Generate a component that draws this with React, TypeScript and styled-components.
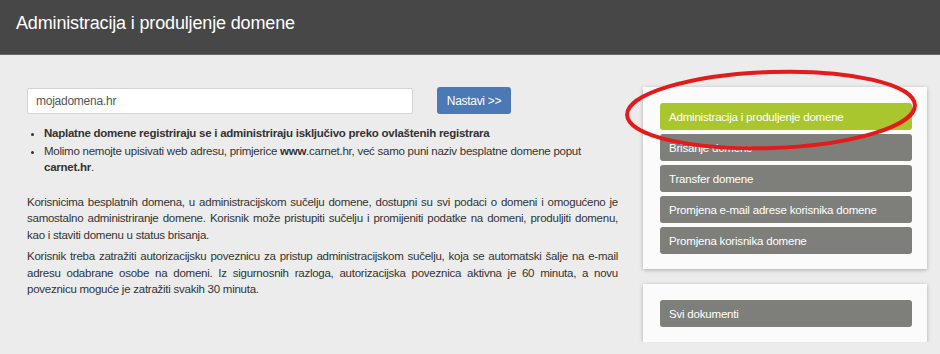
import React from 'react';
import styled, { createGlobalStyle } from 'styled-components';

const GlobalStyle = createGlobalStyle`
  html, body {
    margin: 0;
    padding: 0;
    background-color: #ececec;
    font-family: "Liberation Sans", Arial, sans-serif;
  }
`;

const Header = styled.header`
  height: 55px;
  background-color: #474747;
  border-bottom: 1px solid #6b6b6b;
  display: flex;
  align-items: center;
  padding: 0 16px 8px;
  box-sizing: border-box;
`;

const Title = styled.h1`
  margin: 0;
  font-size: 18px;
  font-weight: 400;
  letter-spacing: -0.15px;
  color: #ffffff;
`;

const Main = styled.main`
  display: flex;
  align-items: flex-start;
  column-gap: 25px;
  padding: 32px 13px 0 27px;
`;

const Content = styled.div`
  width: 591px;
  font-size: 11.5px;
  letter-spacing: -0.25px;
  color: #333333;
`;

const SearchRow = styled.div`
  display: flex;
  align-items: center;
  column-gap: 24px;
`;

const Input = styled.input`
  width: 386px;
  height: 26px;
  box-sizing: border-box;
  border: 1px solid #d4d4d4;
  border-radius: 2px;
  padding: 0 8px;
  font-family: inherit;
  font-size: 12px;
  letter-spacing: -0.25px;
  color: #555555;
  background-color: #ffffff;
`;

const Button = styled.button`
  width: 74px;
  height: 27px;
  border: none;
  border-radius: 3px;
  background-color: #4a79b6;
  color: #ffffff;
  font-family: inherit;
  font-size: 12px;
  letter-spacing: -0.3px;
  cursor: pointer;
`;

const Notes = styled.ul`
  margin: 11px 0 0;
  padding-left: 17px;
  line-height: 16px;
  li {
    margin-bottom: 2px;
  }
`;

const Paragraph = styled.p`
  margin: 0 0 5px;
  line-height: 16.4px;
  text-align: justify;
  &:first-of-type {
    margin-top: 19px;
  }
`;

const Sidebar = styled.aside`
  position: relative;
  width: 284px;
  display: flex;
  flex-direction: column;
  row-gap: 15px;
`;

const Card = styled.div`
  background-color: #fbfbfb;
  box-shadow: 0 1px 4px rgba(0, 0, 0, 0.28);
  padding: 16px 15px 15px 17px;
  display: flex;
  flex-direction: column;
  row-gap: 4px;
`;

const NavItem = styled.a<{ $active?: boolean }>`
  display: flex;
  align-items: center;
  height: 27px;
  padding-left: 9px;
  border-radius: 3px;
  background-color: ${(p) => (p.$active ? '#a9c62e' : '#7e7f7b')};
  color: #ffffff;
  font-size: 11.5px;
  letter-spacing: -0.2px;
  text-decoration: none;
  cursor: pointer;
`;

const Highlight = styled.svg`
  position: absolute;
  left: -18px;
  top: -18px;
  overflow: visible;
  pointer-events: none;
`;

const menu = [
  'Administracija i produljenje domene',
  'Brisanje domene',
  'Transfer domene',
  'Promjena e-mail adrese korisnika domene',
  'Promjena korisnika domene',
];

export default function App() {
  return (
    <>
      <GlobalStyle />
      <Header>
        <Title>Administracija i produljenje domene</Title>
      </Header>
      <Main>
        <Content>
          <SearchRow>
            <Input defaultValue="mojadomena.hr" />
            <Button>Nastavi &gt;&gt;</Button>
          </SearchRow>
          <Notes>
            <li>
              <b>Naplatne domene registriraju se i administriraju isključivo preko ovlaštenih registrara</b>
            </li>
            <li>
              Molimo nemojte upisivati web adresu, primjerice <b>www</b>.carnet.hr, već samo puni naziv besplatne
              domene poput <b>carnet.hr</b>.
            </li>
          </Notes>
          <Paragraph>
            Korisnicima besplatnih domena, u administracijskom sučelju domene, dostupni su svi podaci o domeni i
            omogućeno je samostalno administriranje domene. Korisnik može pristupiti sučelju i promijeniti podatke na
            domeni, produljiti domenu, kao i staviti domenu u status brisanja.
          </Paragraph>
          <Paragraph>
            Korisnik treba zatražiti autorizacijsku poveznicu za pristup administracijskom sučelju, koja se automatski
            šalje na e-mail adresu odabrane osobe na domeni. Iz sigurnosnih razloga, autorizacijska poveznica aktivna
            je 60 minuta, a novu poveznicu moguće je zatražiti svakih 30 minuta.
          </Paragraph>
        </Content>
        <Sidebar>
          <Card>
            {menu.map((label, i) => (
              <NavItem key={label} $active={i === 0}>
                {label}
              </NavItem>
            ))}
          </Card>
          <Card>
            <NavItem>Svi dokumenti</NavItem>
          </Card>
          <Highlight width="300" height="84">
            <ellipse
              cx="146"
              cy="41"
              rx="144"
              ry="38"
              transform="rotate(-2 146 41)"
              fill="none"
              stroke="#e31b1b"
              strokeWidth="4"
            />
          </Highlight>
        </Sidebar>
      </Main>
    </>
  );
}
